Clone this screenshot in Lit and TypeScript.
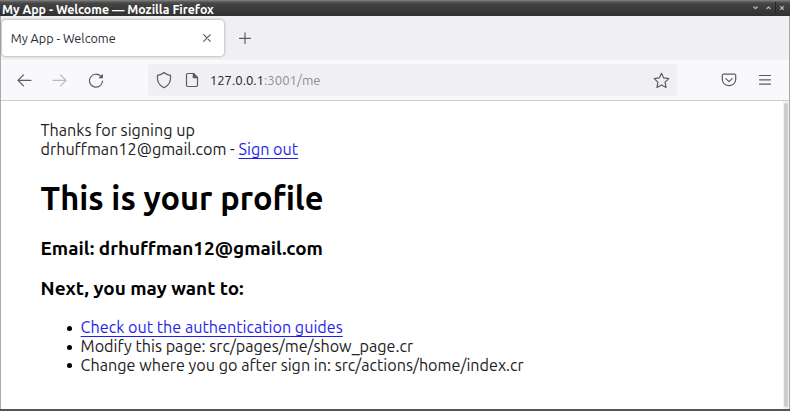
import { LitElement, html, css } from "lit";
import { customElement } from "lit/decorators.js";

@customElement("app-root")
export class AppRoot extends LitElement {
  static styles = css`
    :host { display: block; width: 790px; height: 411px; overflow: hidden; font-family: Ubuntu, "Noto Sans", sans-serif; }
    * { box-sizing: border-box; }
    svg { display: block; fill: none; stroke: #5b5b66; stroke-width: 1.2; stroke-linecap: round; stroke-linejoin: round; flex: none; }
    .window { display: flex; flex-direction: column; height: 411px; border: solid #aaa; border-width: 0 1px; background: #fff; }
    .titlebar { height: 16px; flex: none; margin: 0 -1px; padding: 0 3px 0 2px; display: flex; align-items: center; justify-content: space-between; background: linear-gradient(#858585 0, #555 2px, #434343 4px, #303030 16px); color: #fff; font-size: 12.37px; line-height: 14px; font-weight: 700; }
    .title { padding-top: 1px; }
    .controls { display: flex; align-items: center; gap: 3px; }
    .controls svg { stroke: #bdbdbd; stroke-width: 1.2; }
    .divider { width: 1px; height: 12px; margin: 0 -2px 0 -1px; background: #262626; }
    .tabs { height: 44px; flex: none; background: #f0f0f4; display: flex; align-items: center; padding-left: 1px; }
    .tab { width: 222px; height: 36px; border-radius: 4px; background: #fff; box-shadow: 0 0 3px rgba(0, 0, 0, .4); display: flex; align-items: center; justify-content: space-between; padding: 0 12px 0 8.7px; font-size: 12.6px; color: #2b2a33; }
    .plus { margin-left: 15px; }
    .toolbar { height: 41px; flex: none; background: #f9f9fb; border-bottom: 1px solid #ccc; display: flex; align-items: center; padding-left: 15px; }
    .forward { margin-left: 20px; opacity: .4; }
    .reload { margin-left: 20px; }
    .url { margin-left: 44px; width: 529px; height: 32px; border-radius: 4px; background: #f0f0f4; display: flex; align-items: center; padding: 0 7.5px 0 6.7px; font-size: 13.2px; color: #8f8f98; }
    .url b { font-weight: 400; color: #222; }
    .address { margin-left: 11px; flex: 1; }
    .doc { margin-left: 12px; }
    .pocket { margin-left: 44px; }
    .menu { margin-left: 20px; }
    .view { flex: 1; display: flex; justify-content: space-between; }
    .page { padding: 20px 0 0 39.6px; font-size: 16.17px; line-height: 18.6px; color: #222; white-space: nowrap; }
    a { color: #1f1fe8; text-decoration: underline; text-decoration-thickness: 1px; text-underline-offset: 2.5px; }
    h1 { margin: 21px 0 0; font-size: 32.6px; line-height: 38px; color: #000; }
    h3 { margin: 18.5px 0 0; font-size: 18.93px; line-height: 21.5px; color: #000; }
    h1 + h3 { margin-top: 21px; }
    ul { margin: 18.3px 0 0; padding-left: 26.5px; list-style: none; line-height: 18.8px; }
    li { display: flex; align-items: center; gap: 8.5px; }
    li::before { content: ""; width: 5px; height: 5px; margin-top: 2px; border-radius: 50%; background: #000; }
    .scroll { width: 6px; background: #f0f0f0; padding: 2px 1px; display: flex; }
    .thumb { flex: 1; background: #cdcdcd; border-radius: 2px; }
    .bottom { height: 2px; flex: none; background: #555; margin: 0 -1px; }
  `;

  render() {
    return html`<div class="window">
      <div class="titlebar">
        <span class="title">My App - Welcome — Mozilla Firefox</span>
        <div class="controls">
          <svg width="10" height="10" viewBox="0 0 10 10"><path d="M3.8 4 5.5 5.7 7.2 4" /></svg>
          <svg width="10" height="10" viewBox="0 0 10 10"><path d="M3.8 5.7 5.5 4 7.2 5.7" /></svg>
          <div class="divider"></div>
          <svg width="10" height="10" viewBox="0 0 10 10"><path d="m3.6 3.6 2.8 2.8m0-2.8L3.6 6.4" /></svg>
        </div>
      </div>
      <div class="tabs">
        <div class="tab">
          <span>My App - Welcome</span>
          <svg width="10" height="10" viewBox="0 0 10 10"><path d="m1.7 1.7 6.6 6.6m0-6.6L1.7 8.3" /></svg>
        </div>
        <svg class="plus" width="12" height="12" viewBox="0 0 12 12"><path d="M6 .8v11M.5 6.3h11" /></svg>
      </div>
      <div class="toolbar">
        <svg width="16" height="16" viewBox="0 0 16 16"><path d="M15 8.300H2M7.500 2.800 2 8.300l5.500 5.500" /></svg>
        <svg class="forward" width="16" height="16" viewBox="0 0 16 16"><path d="M1 8.300h13M8.500 2.800 14 8.300l-5.500 5.500" /></svg>
        <svg class="reload" width="16" height="16" viewBox="0 0 16 16"><path d="M14.500 9A6.500 6.500 0 1 1 12.700 4.200L13.500 5" /><path d="M14.900 1.700v4.500h-4.500z" fill="#5b5b66" stroke="none" /></svg>
        <div class="url">
          <svg width="18" height="18" viewBox="0 0 18 18"><path d="M9 1.500C10.800 3.200 13 4 15.500 4.300c.7 4.900-1 9.700-6.500 12.400C3.500 14 1.800 9.200 2.500 4.300 5 4 7.200 3.200 9 1.500z" /></svg>
          <svg class="doc" width="14" height="16" viewBox="0 0 14 16"><path d="M8.500 1.500H3A1.500 1.500 0 0 0 1.500 3v10A1.500 1.500 0 0 0 3 14.500h8a1.500 1.500 0 0 0 1.500-1.500V5.500z" /><path d="M8.300 1.500v4.200h4.200z" fill="#5b5b66" /></svg>
          <span class="address"><b>127.0.0.1</b>:3001/me</span>
          <svg width="17" height="17" viewBox="0 0 17 17"><path d="M8.500 1.300 10.700 5.900 15.800 6.600 12.100 10.100 13 15.400 8.500 12.900 4 15.400 4.900 10.100 1.200 6.600 6.300 5.900z" /></svg>
        </div>
        <svg class="pocket" width="16" height="16" viewBox="0 0 16 16"><path d="M2.500 2.200h11a1.200 1.200 0 0 1 1.200 1.200v4.100a6.700 6.200 0 0 1-13.400 0V3.400a1.200 1.200 0 0 1 1.200-1.200zM4.800 6.600 8 9.600l3.200-3" /></svg>
        <svg class="menu" width="16" height="16" viewBox="0 0 16 16"><path d="M2.500 3.500h11M2.500 7.800h11M2.500 12.100h11" /></svg>
      </div>
      <div class="view">
        <div class="page">
          <div>Thanks for signing up</div>
          <div>drhuffman12@gmail.com - <a>Sign out</a></div>
          <h1>This is your profile</h1>
          <h3>Email: drhuffman12@gmail.com</h3>
          <h3>Next, you may want to:</h3>
          <ul>
            <li><a>Check out the authentication guides</a></li>
            <li>Modify this page: src/pages/me/show_page.cr</li>
            <li>Change where you go after sign in: src/actions/home/index.cr</li>
          </ul>
        </div>
        <div class="scroll"><div class="thumb"></div></div>
      </div>
      <div class="bottom"></div>
    </div>`;
  }
}
